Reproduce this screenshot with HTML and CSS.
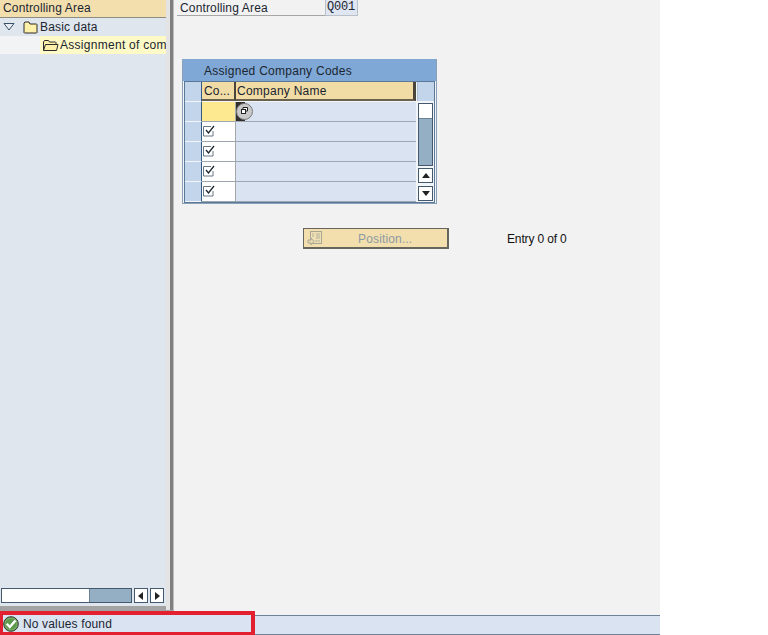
FILE: index.html
```html
<!DOCTYPE html>
<html lang="en">
<head>
<meta charset="utf-8">
<title>Assigned Company Codes</title>
<link rel="stylesheet" href="styles.css">
</head>
<body>
<div class="app">
  <div class="main">
    <aside class="tree">
      <div class="tree-head">Controlling Area</div>
      <div class="tree-row">
        <svg class="twist" width="12" height="8" viewBox="0 0 12 8"><path d="M1 .5h10L6 7z" fill="#e8edf3" stroke="#3b4f66"/></svg>
        <svg class="folder" width="15" height="13" viewBox="0 0 15 13"><path d="M1 3V2l1-1h4l1 2h6.500l.5.500V11.500l-.5.500H1.500L1 11.500z" fill="#fdf0a8" stroke="#2b2b2b"/></svg>
        <span>Basic data</span>
      </div>
      <div class="tree-row tree-sel">
        <div class="sel-gap"></div>
        <div class="sel-body">
          <svg class="folder-open" width="17" height="13" viewBox="0 0 17 13"><path d="M1.500 11.500V3l1-1.500h4l1 1.500h6l.5.500v2" fill="#fdf0a8" stroke="#2b2b2b"/><path d="M1.500 11.500L3.500 5.500h12.500l-1.500 6z" fill="#fdf0a8" stroke="#2b2b2b"/></svg>
          <span class="sel-text">Assignment of com</span>
        </div>
      </div>
      <div class="tree-fill"></div>
      <div class="hscroll">
        <div class="h-track"><div class="h-thumb"></div><div class="h-rest"></div></div>
        <div class="sb-btn"><svg width="6" height="8" viewBox="0 0 6 8"><path d="M5 0v8L0 4z" fill="#222"/></svg></div>
        <div class="sb-btn"><svg width="6" height="8" viewBox="0 0 6 8"><path d="M1 0v8l5-4z" fill="#222"/></svg></div>
      </div>
    </aside>
    <div class="split"></div>
    <section class="content">
      <div class="field-row">
        <div class="field-label">Controlling Area</div>
        <div class="field-value">Q001</div>
      </div>
      <div class="table">
        <div class="table-title">Assigned Company Codes</div>
        <div class="table-body">
          <div class="grid">
            <div class="rh"></div>
            <div class="th th-co">Co...</div>
            <div class="th th-name">Company Name</div>

            <div class="rh"></div>
            <div class="td co co-active"></div>
            <div class="td name">
              <svg class="f4" width="17" height="19" viewBox="0 0 17 19"><path d="M0 0h9v19H0z" fill="#33302c"/><circle cx="8.500" cy="9.500" r="8" fill="#c9c9c9" stroke="#77797c"/><path d="M7 7.500V5.500h4.500v3.500H10" fill="#fff" stroke="#222"/><rect x="5.500" y="7.500" width="4" height="4" fill="#fff" stroke="#222"/></svg>
            </div>

            <div class="rh"></div>
            <div class="td co"><svg class="check" width="12" height="12" viewBox="0 0 12 12"><path d="M8 1.500H.5v9.500h9.500V6" fill="#fff" stroke="#6b7785"/><path d="M3 5l2.500 3L11 1" fill="none" stroke="#1d2630" stroke-width="1.300"/></svg></div>
            <div class="td name"></div>

            <div class="rh"></div>
            <div class="td co"><svg class="check" width="12" height="12" viewBox="0 0 12 12"><path d="M8 1.500H.5v9.500h9.500V6" fill="#fff" stroke="#6b7785"/><path d="M3 5l2.500 3L11 1" fill="none" stroke="#1d2630" stroke-width="1.300"/></svg></div>
            <div class="td name"></div>

            <div class="rh"></div>
            <div class="td co"><svg class="check" width="12" height="12" viewBox="0 0 12 12"><path d="M8 1.500H.5v9.500h9.500V6" fill="#fff" stroke="#6b7785"/><path d="M3 5l2.500 3L11 1" fill="none" stroke="#1d2630" stroke-width="1.300"/></svg></div>
            <div class="td name"></div>

            <div class="rh"></div>
            <div class="td co"><svg class="check" width="12" height="12" viewBox="0 0 12 12"><path d="M8 1.500H.5v9.500h9.500V6" fill="#fff" stroke="#6b7785"/><path d="M3 5l2.500 3L11 1" fill="none" stroke="#1d2630" stroke-width="1.300"/></svg></div>
            <div class="td name"></div>
          </div>
          <div class="vbar">
            <div class="v-corner"></div>
            <div class="v-track"><div class="v-thumb"></div><div class="v-rest"></div></div>
            <div class="sb-btn v-btn"><svg width="8" height="5" viewBox="0 0 8 5"><path d="M0 5h8L4 0z" fill="#222"/></svg></div>
            <div class="sb-btn v-btn"><svg width="8" height="5" viewBox="0 0 8 5"><path d="M0 0h8L4 5z" fill="#222"/></svg></div>
          </div>
        </div>
      </div>
      <div class="pos-row">
        <div class="pos-btn">
          <svg class="pos-icon" width="16" height="16" viewBox="0 0 16 16"><rect x="3.500" y="1.500" width="11" height="12" fill="#efe0b4" stroke="#a9a793"/><path d="M9 4h4M9 6h4M9 8h4M5 4h2M5 6h2M8 11h5" stroke="#b5b29c"/><path d="M1 10h3V8l3 3.500L4 15v-2H1z" fill="#e9d9ac" stroke="#a9a793"/></svg>
          <span class="pos-text">Position...</span>
        </div>
        <div class="entry">Entry 0 of 0</div>
      </div>
    </section>
  </div>
  <footer class="status">
    <div class="msg">
      <svg class="ok" width="16" height="16" viewBox="0 0 16 16"><circle cx="8" cy="8" r="7.300" fill="#7fae6a" stroke="#2a3327"/><circle cx="8" cy="8" r="5.500" fill="#5c9a4c"/><path d="M3.800 7.800l3 3.200L12.500 4.500" fill="none" stroke="#fff" stroke-width="2.400"/></svg>
      <span>No values found</span>
    </div>
    <div class="status-rest"></div>
  </footer>
</div>
</body>
</html>
```
FILE: styles.css
```css
* { box-sizing: border-box; }
html, body { margin: 0; padding: 0; background: #fff; }
body { font: 12px/1 "Liberation Sans", Arial, sans-serif; color: #1b2530; letter-spacing: .15px; }
.app { width: 660px; height: 635px; display: flex; flex-direction: column; background: #f2f2f2; }
.main { flex: none; height: 611px; display: flex; }

.tree { width: 166px; flex: none; display: flex; flex-direction: column; background: #dfe6ee; border-bottom: 5px solid #a3a3a3; }
.tree-head { height: 18px; padding: 1px 0 0 3px; line-height: 15px; background: #f3dfae; border-bottom: 1px solid #8c8c82; }
.tree-row { height: 18px; display: flex; align-items: center; }
.twist { margin-left: 3px; }
.folder { margin-left: 8px; margin-right: 2px; }
.tree-sel { background: #f2f3f4; }
.sel-gap { width: 40px; flex: none; }
.sel-body { flex: 1; min-width: 0; height: 18px; display: flex; align-items: center; background: #fdfac8; overflow: hidden; }
.folder-open { margin-left: 2px; margin-right: 1px; flex: none; }
.sel-text { white-space: nowrap; letter-spacing: .28px; }
.tree-fill { flex: 1; }
.hscroll { height: 15px; margin-bottom: 3px; padding-left: 1px; display: flex; gap: 2px; }
.h-track { width: 131px; display: flex; border: 1px solid #45596e; }
.h-thumb { width: 88px; background: #fff; border-right: 1px solid #6b8296; }
.h-rest { flex: 1; background: #94afc4; }
.sb-btn { width: 14px; height: 15px; display: flex; align-items: center; justify-content: center; background: #fff; border: 1px solid #45596e; }
.split { width: 8px; flex: none; background: linear-gradient(90deg, #e4e4e4 0 4px, #7f7f7f 4px 7px, #bdbdbd 7px 8px); border-bottom: 1px solid #a3a3a3; }

.content { flex: 1; padding-left: 3px; }
.field-row { height: 16px; display: flex; }
.field-label { width: 148px; padding: 1px 0 0 3px; line-height: 14px; border-bottom: 1px solid #a6a6a6; }
.field-value { width: 33px; padding-left: 1px; font: 12px/14px "Liberation Mono", monospace; letter-spacing: -.2px; background: #dfe6f2; border: 1px solid #b9c0c8; border-top: 0; }

.table { width: 255px; margin: 43px 0 0 5px; border: 1px solid #8aa0b8; border-top: 0; background: #f2f5f8; }
.table-title { height: 22px; padding: 5px 0 0 21px; line-height: 14px; letter-spacing: .27px; background: #7fa8d6; }
.table-body { display: flex; margin: 0 1px; border: 1px solid #5b7997; }
.grid { width: 231px; display: grid; grid-template-columns: 17px 34px 180px; grid-template-rows: repeat(6, 20px); }
.rh { background: #c3d5ea; border-right: 1px solid #35597f; border-bottom: 1px solid #f2f5f8; }
.th { background: #f1dca6; line-height: 18px; height: 19px; border-bottom: 2px solid #6a6250; }
.th-co { padding-left: 2px; border-right: 2px solid #4a453a; white-space: nowrap; overflow: hidden; }
.th-name { padding-left: 1px; border-right: 3px solid #4a453a; letter-spacing: .25px; }
.td { border-bottom: 1px solid #9da7b2; }
.co { background: #fff; border-right: 1px solid #a4a8ab; padding: 3px 0 0 1px; }
.co-active { background: #fde98f; }
.name { background: #d9e3f1; }
.check { display: block; }
.f4 { display: block; }

.vbar { width: 17px; margin-left: 1px; display: flex; flex-direction: column; }
.v-corner { height: 19px; margin-bottom: 2px; background: #c3d5ea; border-left: 1px solid #aebfd1; }
.v-track { height: 63px; margin-left: 1px; width: 15px; display: flex; flex-direction: column; border: 1px solid #45596e; }
.v-thumb { height: 15px; background: #fff; border-bottom: 1px solid #6b8296; }
.v-rest { flex: 1; background: #94afc4; }
.v-btn { width: 15px; height: 15px; margin: 3px 0 0 1px; }
.v-track + .v-btn { margin-top: 2px; }

.pos-row { display: flex; align-items: center; margin: 24px 0 0 126px; }
.pos-btn { width: 146px; height: 21px; display: flex; align-items: center; background: #f3dfae; border: 1px solid #67655c; border-right-width: 2px; border-bottom-width: 2px; padding-left: 3px; }
.pos-text { margin-left: 35px; padding-top: 1px; color: #8d9aa4; }
.pos-icon { flex: none; }
.entry { margin-left: 58px; color: #111; letter-spacing: -.15px; }

.status { height: 24px; display: flex; }
.msg { width: 255px; height: 24px; flex: none; display: flex; align-items: center; gap: 4px; background: #d9e3f1; border: 4px solid #e2202f; border-left-width: 3px; border-bottom-width: 3px; }
.status-rest { flex: 1; margin-top: 4px; background: #d9e3f1; border-top: 1px solid #6f8299; border-bottom: 1px solid #6f8299; }
```
